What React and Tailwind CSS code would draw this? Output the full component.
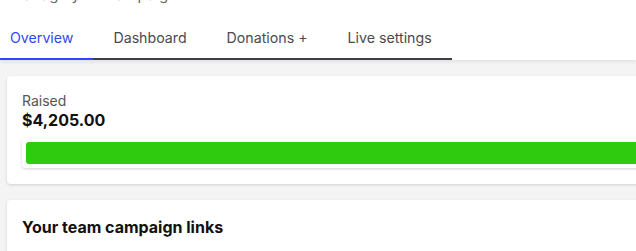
import React from 'react';

const tabs = ['Overview', 'Dashboard', 'Donations +', 'Live settings'];

function App() {
  const active = 'Overview';

  return (
    <div
      className="w-[636px] h-[251px] overflow-hidden bg-[#f4f4f5]"
      style={{ fontFamily: 'Inter, "Noto Sans", sans-serif' }}
    >
      {/* header (page title scrolled off the top) */}
      <div className="bg-white relative z-10 shadow-[0_2px_4px_rgba(0,0,0,0.08)]">
        <div className="h-[4px] overflow-hidden pl-[10px]">
          <div className="text-[15px] leading-[20px] text-[#666] -mt-[15px] whitespace-nowrap">
            Manage your campaign
          </div>
        </div>
        <nav className="flex w-fit -ml-[10px] border-b-2 border-[#3f3f46]">
          {tabs.map((t) => (
            <div
              key={t}
              className={
                t === active
                  ? 'shrink-0 whitespace-nowrap px-[20px] pt-[24px] pb-[8px] -mb-[2px] leading-[20px] text-[14.2px] text-[#3346f4] border-b-2 border-[#3346f4]'
                  : 'shrink-0 whitespace-nowrap px-[20px] pt-[24px] pb-[10px] leading-[20px] text-[14.2px] text-[#4a4a4f]'
              }
            >
              {t}
            </div>
          ))}
        </nav>
      </div>

      <div className="pl-[7px] pt-[16px] flex flex-col gap-[16px]">
        <div className="w-[700px] bg-white rounded-[4px] shadow-[0_1px_3px_rgba(0,0,0,0.15)] pt-[16px] pb-[16px] px-[15px]">
          <div className="text-[14px] leading-[18px] text-[#555]">Raised</div>
          <div className="text-[16px] leading-[20px] font-bold text-[#111]">$4,205.00</div>
          <div className="mt-[8px] bg-white rounded-[4px] shadow-[0_1px_3px_rgba(0,0,0,0.18)] p-[4px]">
            <div className="h-[22px] bg-[#2ecb0e] rounded-l-[3px]" />
          </div>
        </div>

        <div className="w-[700px] bg-white rounded-[4px] shadow-[0_1px_3px_rgba(0,0,0,0.15)] pt-[15px] pb-[20px] px-[15px]">
          <h2 className="text-[16px] leading-[24px] font-bold text-[#111]">Your team campaign links</h2>
        </div>
      </div>
    </div>
  );
}

export default App;
